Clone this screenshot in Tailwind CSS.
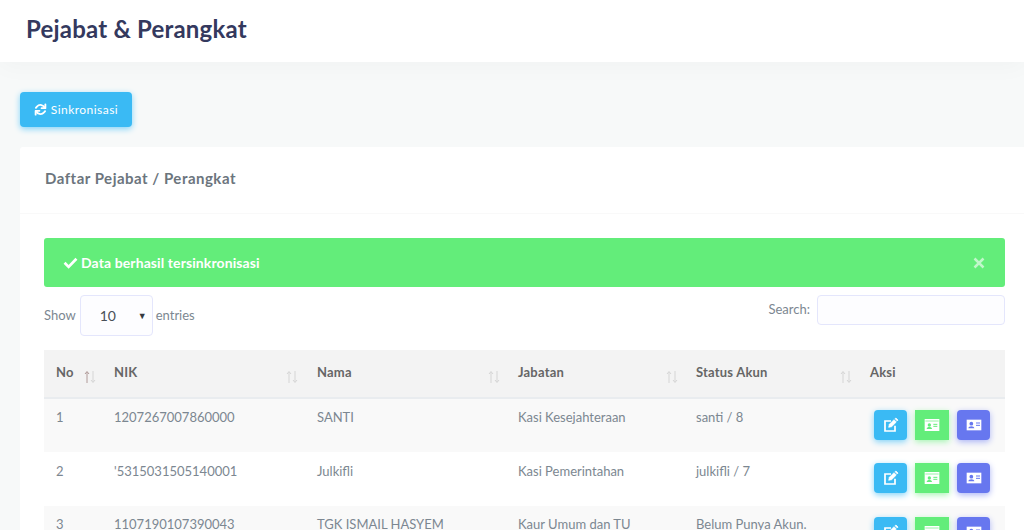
<!DOCTYPE html>
<html lang="en">
<head>
  <meta charset="UTF-8">
  <meta name="viewport" content="width=device-width, initial-scale=1.0">
  <title>Pejabat &amp; Perangkat</title>
  <script src="https://cdn.jsdelivr.net/npm/@tailwindcss/browser@4"></script>
</head>
<body class="h-[530px] overflow-hidden bg-[#f7f9f9] font-['Lato','Noto_Sans',sans-serif] text-[13px] text-[#6c757d]">
  <header class="h-[62px] bg-white pl-[26px] pt-[15px] shadow-[0_4px_25px_rgba(0,0,0,0.03)]">
    <h1 class="text-[24px] leading-[28px] font-bold tracking-[0.2px] text-[#34395e]">Pejabat &amp; Perangkat</h1>
  </header>

  <main class="pl-[20px] pt-[30px]">
    <button class="flex h-[35px] w-[112px] items-center justify-center gap-[4px] rounded-[4px] bg-[#3abaf4] text-[12px] tracking-[0.45px] text-white shadow-[0_2px_6px_#82d3f8]">
      <svg class="h-[13px] w-[13px]" viewBox="0 0 24 24" fill="none" stroke="white" stroke-width="3.4" stroke-linecap="round" stroke-linejoin="round">
        <path d="M20 9.500A8.500 8.500 0 0 0 5.500 6.500L3.500 9" />
        <path d="M21 2.500V9.500H14" />
        <path d="M4 14.500A8.500 8.500 0 0 0 18.500 17.500L20.500 15" />
        <path d="M3 21.500V14.500H10" />
      </svg>
      Sinkronisasi
    </button>

    <section class="mt-[20px] rounded-l-[3px] bg-white">
      <div class="flex h-[67px] items-center border-b border-[#f9f9f9] pb-[3px] pl-[25px]">
        <h2 class="text-[15px] font-bold tracking-[0.5px] text-[#6c757d]">Daftar Pejabat / Perangkat</h2>
      </div>

      <div class="ml-[24px] w-[961px] pt-[24px]">
        <div class="flex h-[49px] items-center justify-between rounded-[3px] bg-[#63ed7a] pl-[19px] pr-[20px] text-[14px] font-bold tracking-[0.1px] text-white">
          <span class="flex items-center gap-[3px] pb-[1px]">
            <svg class="h-[15px] w-[15px]" viewBox="0 0 24 24" fill="none" stroke="white" stroke-width="4.4">
              <path d="M2.500 12.500L9 19L21.500 6" />
            </svg>
            Data berhasil tersinkronisasi
          </span>
          <svg class="h-[12px] w-[12px] opacity-60" viewBox="0 0 24 24" fill="none" stroke="white" stroke-width="5">
            <path d="M3 3L21 21M21 3L3 21" />
          </svg>
        </div>

        <div class="mt-[8px] flex items-start justify-between">
          <label class="flex items-center gap-[3px] text-[#7c8791]">
            <span class="pr-[1px]">Show</span>
            <span class="relative flex h-[41px] w-[73px] items-center rounded-[4px] border border-[#e4e6fc] bg-[#fdfdff] pl-[19px] text-[14px] text-[#495057]">
              10
              <span class="absolute right-[5px] top-[13px] text-[9px] text-[#343a40]">▼</span>
            </span>
            entries
          </label>
          <label class="flex items-center gap-[7px] text-[#7c8791]">
            Search:
            <span class="h-[30px] w-[188px] rounded-[4px] border border-[#e4e6fc] bg-[#fdfdff]"></span>
          </label>
        </div>

        <table class="mt-[14px] w-full table-fixed border-collapse text-left">
          <colgroup>
            <col class="w-[58px]">
            <col class="w-[202px]">
            <col class="w-[202px]">
            <col class="w-[178px]">
            <col class="w-[174px]">
            <col>
          </colgroup>
          <thead class="bg-[#f3f3f3] font-bold tracking-[0.2px] text-[#666]">
            <tr class="h-[48px] border-b-2 border-[#e9ecef]">
              <th class="relative pb-[2px] pl-[12px]">No
                <svg class="absolute bottom-[13px] right-[6px] h-[14px] w-[12px]" viewBox="0 0 12 14" fill="none" stroke-width="1"><path d="M3 13V2M1 4L3 1.500L5 4" stroke="#b09a98" /><path d="M9 1V12M7 10L9 12.500L11 10" stroke="#d5d5d5" /></svg>
              </th>
              <th class="relative pb-[2px] pl-[12px]">NIK
                <svg class="absolute bottom-[13px] right-[6px] h-[14px] w-[12px]" viewBox="0 0 12 14" fill="none" stroke="#d5d5d5" stroke-width="1"><path d="M3 13V2M1 4L3 1.500L5 4" /><path d="M9 1V12M7 10L9 12.500L11 10" /></svg>
              </th>
              <th class="relative pb-[2px] pl-[12px]"><span class="pl-[1px]">Nama</span>
                <svg class="absolute bottom-[13px] right-[6px] h-[14px] w-[12px]" viewBox="0 0 12 14" fill="none" stroke="#d5d5d5" stroke-width="1"><path d="M3 13V2M1 4L3 1.500L5 4" /><path d="M9 1V12M7 10L9 12.500L11 10" /></svg>
              </th>
              <th class="relative pb-[2px] pl-[12px]">Jabatan
                <svg class="absolute bottom-[13px] right-[6px] h-[14px] w-[12px]" viewBox="0 0 12 14" fill="none" stroke="#d5d5d5" stroke-width="1"><path d="M3 13V2M1 4L3 1.500L5 4" /><path d="M9 1V12M7 10L9 12.500L11 10" /></svg>
              </th>
              <th class="relative pb-[2px] pl-[12px]">Status Akun
                <svg class="absolute bottom-[13px] right-[6px] h-[14px] w-[12px]" viewBox="0 0 12 14" fill="none" stroke="#d5d5d5" stroke-width="1"><path d="M3 13V2M1 4L3 1.500L5 4" /><path d="M9 1V12M7 10L9 12.500L11 10" /></svg>
              </th>
              <th class="pb-[2px] pl-[12px]">Aksi</th>
            </tr>
          </thead>
          <tbody class="text-[#7c8791]">
            <tr class="h-[54px] bg-[#f9f9f9]">
              <td class="pb-[15px] pl-[12px]">1</td>
              <td class="pb-[15px] pl-[12px]">1207267007860000</td>
              <td class="pb-[15px] pl-[13px]">SANTI</td>
              <td class="pb-[15px] pl-[12px]">Kasi Kesejahteraan</td>
              <td class="pb-[15px] pl-[12px]">santi / 8</td>
              <td class="pb-[2px] pl-[16px]">
                <div class="flex gap-[8px]">
                  <span class="flex h-[30px] w-[33px] items-center justify-center rounded-[4px] bg-[#3abaf4] shadow-[0_2px_6px_#82d3f8]">
                    <svg class="h-[16px] w-[16px]" viewBox="0 0 24 24" fill="none" stroke="white" stroke-width="2.600"><path d="M18 13V21H3V6H12" /><path d="M8.500 15.500L9.500 11L16.500 4L20 7.500L13 14.500Z" fill="white" stroke-width="1" /><path d="M18 2.500L19.500 1.500L22.500 4.500L21.500 6Z" fill="white" stroke-width="1" /></svg>
                  </span>
                  <span class="flex h-[30px] w-[34px] items-center justify-center bg-[#63ed7a] shadow-[0_2px_6px_#a8f5b4]">
                    <svg class="h-[16px] w-[16px]" viewBox="0 0 24 24"><path d="M1 3H23V21H1Z" fill="white" /><path d="M2 6H22" stroke="#63ed7a" /><circle cx="8" cy="12" r="2.500" fill="#63ed7a" /><path d="M4 18C4 14 12 14 12 18Z" fill="#63ed7a" /><path d="M14 11H20M14 14H20" stroke="#63ed7a" stroke-width="1.500" /></svg>
                  </span>
                  <span class="flex h-[30px] w-[33px] items-center justify-center rounded-[4px] bg-[#6777ef] shadow-[0_2px_6px_#acb5f6]">
                    <svg class="h-[16px] w-[16px]" viewBox="0 0 24 24"><path d="M1 4H23V20H1Z" fill="white" /><circle cx="8" cy="10" r="2.800" fill="#6777ef" /><path d="M3.500 17C3.500 13 12.500 13 12.500 17Z" fill="#6777ef" /><path d="M15 9H21M15 12.500H21" stroke="#6777ef" stroke-width="1.500" /></svg>
                  </span>
                </div>
              </td>
            </tr>
            <tr class="h-[54px] bg-white">
              <td class="pb-[15px] pl-[12px]">2</td>
              <td class="pb-[15px] pl-[12px]">'5315031505140001</td>
              <td class="pb-[15px] pl-[13px]">Julkifli</td>
              <td class="pb-[15px] pl-[12px]">Kasi Pemerintahan</td>
              <td class="pb-[15px] pl-[12px]">julkifli / 7</td>
              <td class="pb-[2px] pl-[16px]">
                <div class="flex gap-[8px]">
                  <span class="flex h-[30px] w-[33px] items-center justify-center rounded-[4px] bg-[#3abaf4] shadow-[0_2px_6px_#82d3f8]">
                    <svg class="h-[16px] w-[16px]" viewBox="0 0 24 24" fill="none" stroke="white" stroke-width="2.600"><path d="M18 13V21H3V6H12" /><path d="M8.500 15.500L9.500 11L16.500 4L20 7.500L13 14.500Z" fill="white" stroke-width="1" /><path d="M18 2.500L19.500 1.500L22.500 4.500L21.500 6Z" fill="white" stroke-width="1" /></svg>
                  </span>
                  <span class="flex h-[30px] w-[34px] items-center justify-center bg-[#63ed7a] shadow-[0_2px_6px_#a8f5b4]">
                    <svg class="h-[16px] w-[16px]" viewBox="0 0 24 24"><path d="M1 3H23V21H1Z" fill="white" /><path d="M2 6H22" stroke="#63ed7a" /><circle cx="8" cy="12" r="2.500" fill="#63ed7a" /><path d="M4 18C4 14 12 14 12 18Z" fill="#63ed7a" /><path d="M14 11H20M14 14H20" stroke="#63ed7a" stroke-width="1.500" /></svg>
                  </span>
                  <span class="flex h-[30px] w-[33px] items-center justify-center rounded-[4px] bg-[#6777ef] shadow-[0_2px_6px_#acb5f6]">
                    <svg class="h-[16px] w-[16px]" viewBox="0 0 24 24"><path d="M1 4H23V20H1Z" fill="white" /><circle cx="8" cy="10" r="2.800" fill="#6777ef" /><path d="M3.500 17C3.500 13 12.500 13 12.500 17Z" fill="#6777ef" /><path d="M15 9H21M15 12.500H21" stroke="#6777ef" stroke-width="1.500" /></svg>
                  </span>
                </div>
              </td>
            </tr>
            <tr class="h-[53px] bg-[#f9f9f9]">
              <td class="pb-[15px] pl-[12px]">3</td>
              <td class="pb-[15px] pl-[12px]">1107190107390043</td>
              <td class="pb-[15px] pl-[13px]">TGK ISMAIL HASYEM</td>
              <td class="pb-[15px] pl-[12px]">Kaur Umum dan TU</td>
              <td class="pb-[15px] pl-[12px]">Belum Punya Akun.</td>
              <td class="pb-[2px] pl-[16px]">
                <div class="flex gap-[8px]">
                  <span class="flex h-[30px] w-[33px] items-center justify-center rounded-[4px] bg-[#3abaf4] shadow-[0_2px_6px_#82d3f8]">
                    <svg class="h-[16px] w-[16px]" viewBox="0 0 24 24" fill="none" stroke="white" stroke-width="2.600"><path d="M18 13V21H3V6H12" /><path d="M8.500 15.500L9.500 11L16.500 4L20 7.500L13 14.500Z" fill="white" stroke-width="1" /><path d="M18 2.500L19.500 1.500L22.500 4.500L21.500 6Z" fill="white" stroke-width="1" /></svg>
                  </span>
                  <span class="flex h-[30px] w-[34px] items-center justify-center bg-[#63ed7a] shadow-[0_2px_6px_#a8f5b4]">
                    <svg class="h-[16px] w-[16px]" viewBox="0 0 24 24"><path d="M1 3H23V21H1Z" fill="white" /><path d="M2 6H22" stroke="#63ed7a" /><circle cx="8" cy="12" r="2.500" fill="#63ed7a" /><path d="M4 18C4 14 12 14 12 18Z" fill="#63ed7a" /><path d="M14 11H20M14 14H20" stroke="#63ed7a" stroke-width="1.500" /></svg>
                  </span>
                  <span class="flex h-[30px] w-[33px] items-center justify-center rounded-[4px] bg-[#6777ef] shadow-[0_2px_6px_#acb5f6]">
                    <svg class="h-[16px] w-[16px]" viewBox="0 0 24 24"><path d="M1 4H23V20H1Z" fill="white" /><circle cx="8" cy="10" r="2.800" fill="#6777ef" /><path d="M3.500 17C3.500 13 12.500 13 12.500 17Z" fill="#6777ef" /><path d="M15 9H21M15 12.500H21" stroke="#6777ef" stroke-width="1.500" /></svg>
                  </span>
                </div>
              </td>
            </tr>
          </tbody>
        </table>
      </div>
    </section>
  </main>
</body>
</html>
